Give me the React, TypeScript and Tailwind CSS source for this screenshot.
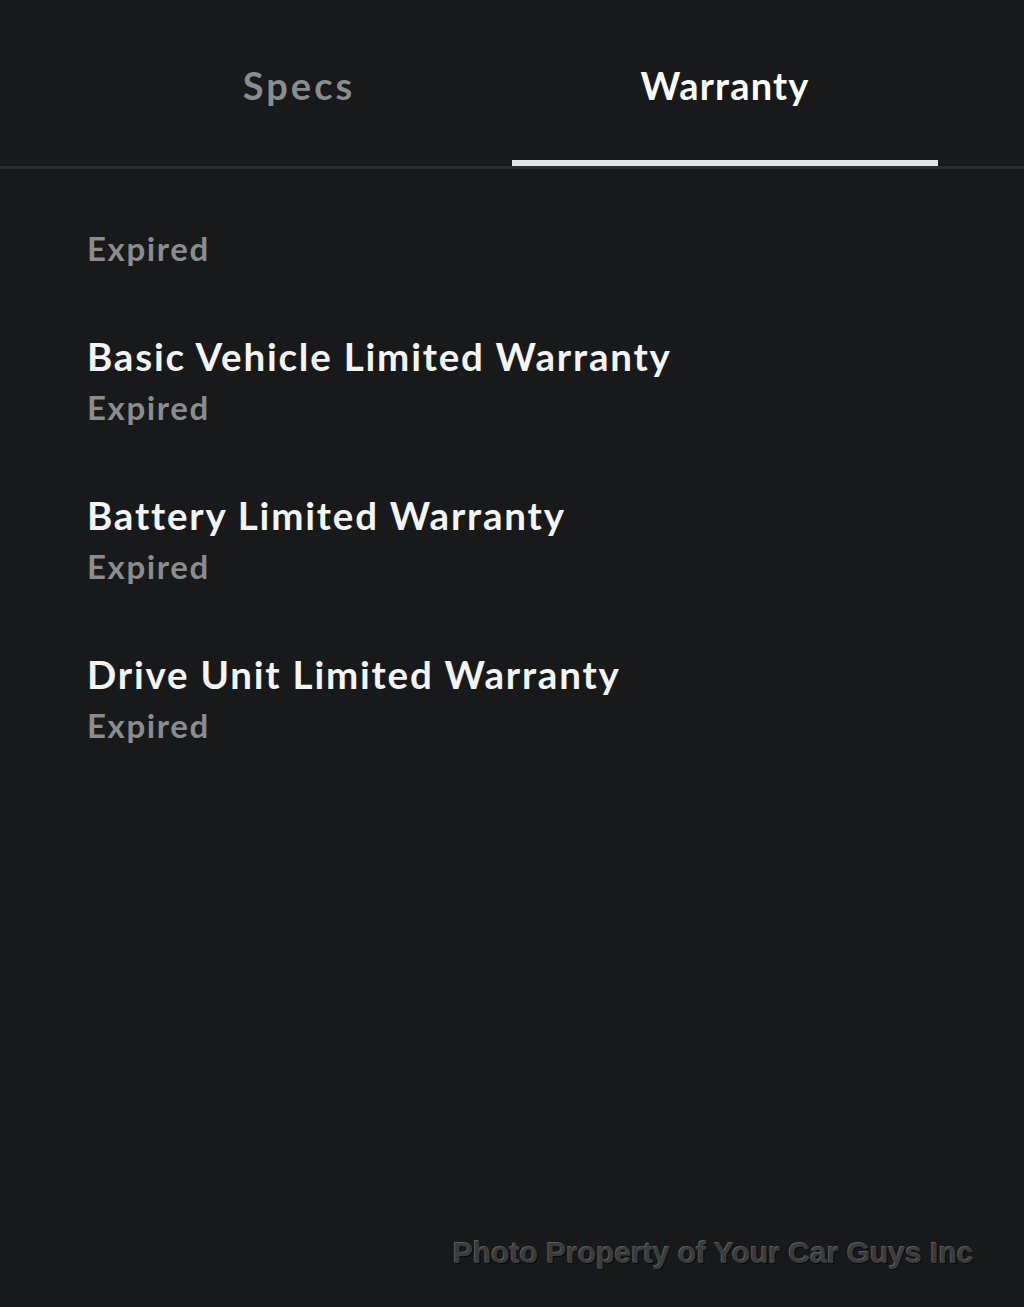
const items = [
  "Basic Vehicle Limited Warranty",
  "Battery Limited Warranty",
  "Drive Unit Limited Warranty",
];

export default function App() {
  return (
    <div className="relative w-[1024px] h-[1307px] bg-[#18191b] font-['Lato',sans-serif] overflow-hidden">
      {/* Tabs */}
      <div className="flex h-[169px] border-b-[3px] border-[#2c2d2f] px-[86px]">
        <div className="flex-1 flex justify-center pt-[57px] text-[38px] font-bold text-[#8b8c8d] tracking-[3px]">
          Specs
        </div>
        <div className="flex-1 flex justify-center pt-[57px] text-[38px] font-bold text-white tracking-[1.2px] relative">
          Warranty
          <div className="absolute left-0 right-0 bottom-0 h-[6px] bg-[#e3e3e3]" />
        </div>
      </div>

      <div className="px-[87px] pt-[59px]">
        <div className="text-[33px] font-bold text-[#8b8c8d] leading-[40px] tracking-[1.6px]">Expired</div>
        <div className="mt-[66px] flex flex-col gap-[66px]">
          {items.map((t) => (
            <div key={t}>
              <div className="text-[38.5px] font-bold text-[#f4f4f4] leading-[44px] tracking-[1.8px]">{t}</div>
              <div className="text-[33px] font-bold text-[#8b8c8d] leading-[40px] mt-[9px] tracking-[1.6px]">Expired</div>
            </div>
          ))}
        </div>
      </div>

      <div className="absolute left-[453px] top-[1230px] text-[30px] font-bold font-['Liberation_Sans',sans-serif] text-[#3a3b3d] [text-shadow:-1px_-1px_0_#5a5b5d,1px_1px_0_#0a0a0b]">
        Photo Property of Your Car Guys Inc
      </div>
    </div>
  );
}
